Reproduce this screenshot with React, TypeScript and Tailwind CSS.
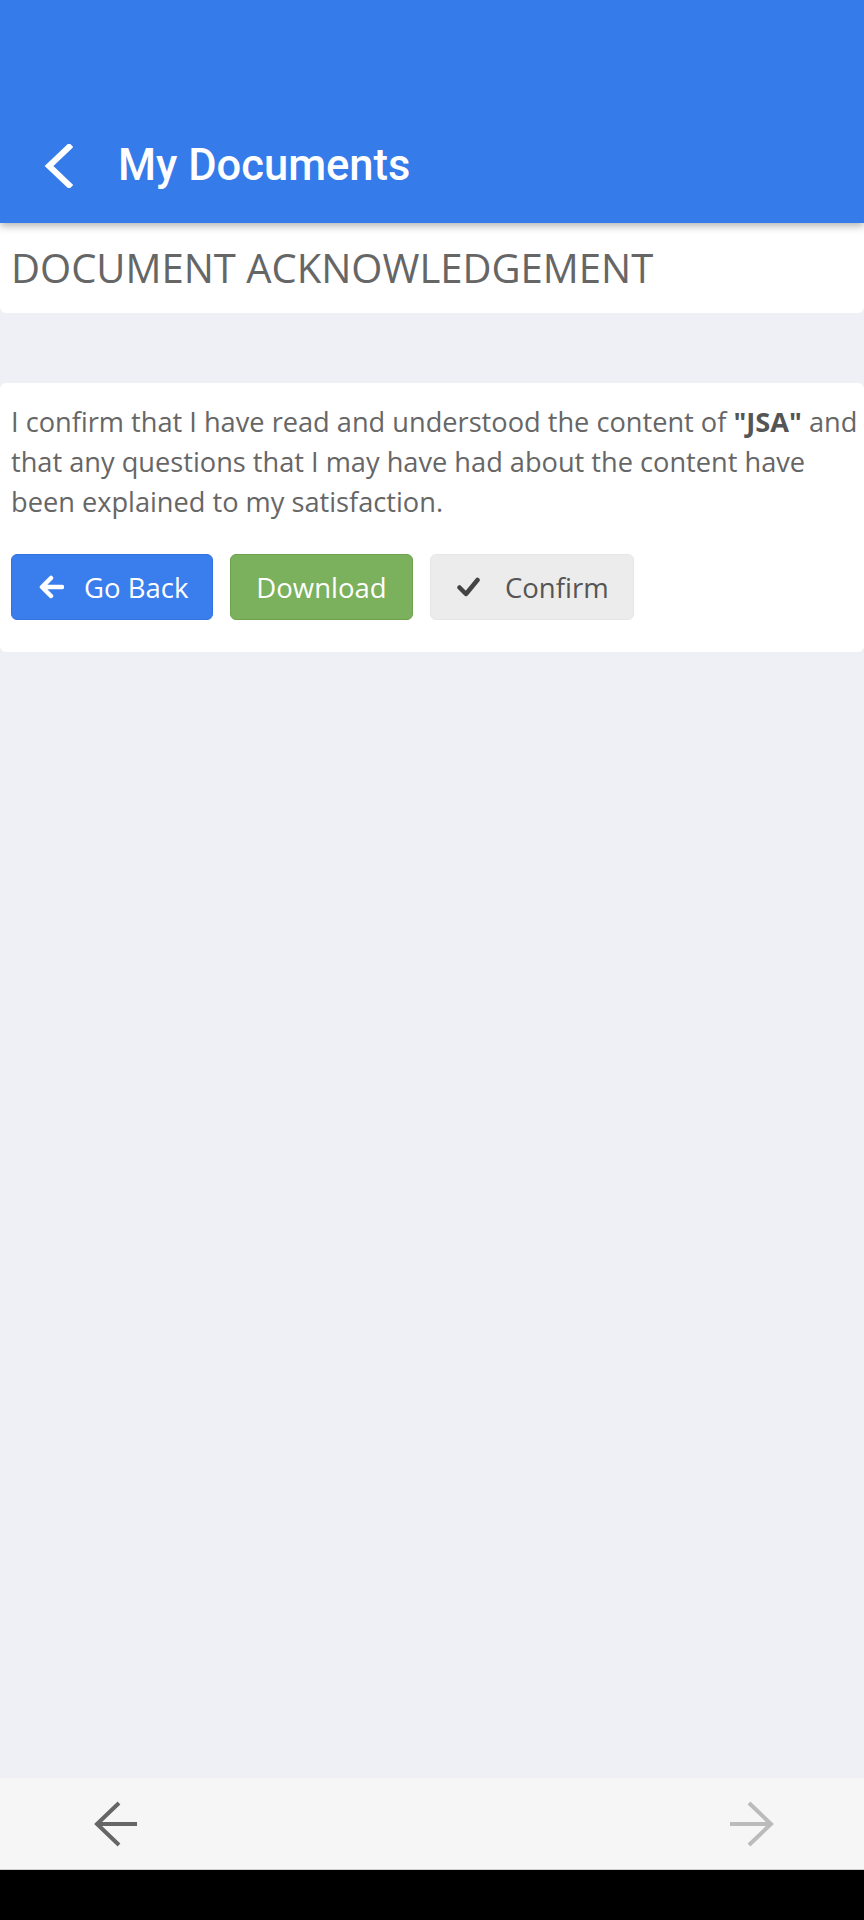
import React from "react";

export default function App() {
  return (
    <div className="min-h-[1920px] w-[864px] flex flex-col bg-[#eff0f5]" style={{ fontFamily: '"Open Sans", sans-serif' }}>
      <header className="h-[223px] bg-[#357bea] flex flex-col justify-end shadow-[0_3px_8px_rgba(0,0,0,0.3)] relative z-10">
        <div className="h-[114px] flex items-center">
          <div className="w-[118px] flex items-center pl-[43px]">
            <svg width="30" height="44" viewBox="0 0 30 44" fill="none">
              <polyline points="26,3 6,22 26,41" stroke="white" strokeWidth="6" strokeLinecap="square" strokeLinejoin="miter" />
            </svg>
          </div>
          <h1 className="text-white text-[43.5px] font-medium leading-none" style={{ fontFamily: 'Roboto, sans-serif' }}>My Documents</h1>
        </div>
      </header>

      <div className="bg-white rounded-b-[6px] px-[11px] pt-[18px] pb-[18px]">
        <h2 className="text-[40px] leading-[1.362] text-[#666]">DOCUMENT ACKNOWLEDGEMENT</h2>
      </div>

      <div className="mt-[70px] bg-white rounded-[6px] pl-[11px] pr-[2px] pt-[19px] pb-[32px]">
        <p className="text-[27.2px] leading-[40px] text-[#666]">
          I confirm that I have read and understood the content of <b className="font-bold text-[#555]">"JSA"</b> and that any questions that I may have had about the content have been explained to my satisfaction.
        </p>
        <div className="mt-[32px] flex gap-[17px]">
          <button className="h-[66px] w-[202px] rounded-[6px] bg-[#3a7dec] border border-[#3474e0] text-white text-[27.5px] flex items-center pl-[26px] gap-[20px]">
            <svg width="26" height="24" viewBox="0 0 26 24" fill="none">
              <path d="M24 12H5M13 3L4 12l9 9" stroke="white" strokeWidth="4.5" strokeLinecap="round" strokeLinejoin="round" />
            </svg>
            <span>Go Back</span>
          </button>
          <button className="h-[66px] w-[183px] rounded-[6px] bg-[#7bb05c] border border-[#6ea24f] text-white text-[27.5px] flex items-center justify-center">
            Download
          </button>
          <button className="h-[66px] w-[204px] rounded-[6px] bg-[#ececec] border border-[#e6e6e6] text-[#555] text-[27.5px] flex items-center pl-[26px] gap-[25px]">
            <svg width="23" height="20" viewBox="0 0 23 20" fill="none">
              <path d="M2.5 10.5l6.5 6.5L20.5 3" stroke="#444" strokeWidth="4.5" strokeLinecap="round" strokeLinejoin="round" />
            </svg>
            <span>Confirm</span>
          </button>
        </div>
      </div>

      <div className="flex-1" />

      <nav className="h-[92px] bg-[#f6f6f6] flex items-center justify-between pl-[92px] pr-[88px] border-b border-[#cfcfcf]">
        <svg width="46" height="46" viewBox="0 0 46 46" fill="none">
          <path d="M45 23H7" stroke="#666" strokeWidth="4" />
          <path d="M27 2L5 23l22 21" stroke="#666" strokeWidth="4" fill="none" />
        </svg>
        <svg width="46" height="46" viewBox="0 0 46 46" fill="none">
          <path d="M0 23H39" stroke="#bbb" strokeWidth="4" />
          <path d="M19 2L41 23 19 44" stroke="#bbb" strokeWidth="4" fill="none" />
        </svg>
      </nav>
      <div className="h-[50px] bg-black" />
    </div>
  );
}
